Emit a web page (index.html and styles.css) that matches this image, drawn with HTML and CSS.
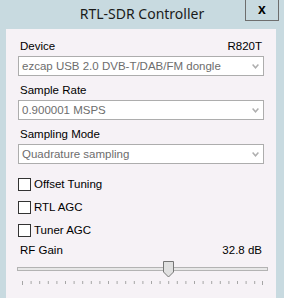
FILE: index.html
```html
<!DOCTYPE html>
<html>
<head>
<meta charset="utf-8">
<link rel="stylesheet" href="styles.css">
</head>
<body>
<div class="window">
  <div class="titlebar">
    <span class="title">RTL-SDR Controller</span>
    <span class="close">x</span>
  </div>
  <div class="panel">
    <div class="field">
      <div class="label-row"><span>Device</span><span>R820T</span></div>
      <div class="combo"><span>ezcap USB 2.0 DVB-T/DAB/FM dongle</span><svg class="chev" width="7" height="5" viewBox="0 0 7 5"><polyline points="0.6,0.6 3.5,3.8 6.4,0.6" fill="none" stroke="#aeaeae" stroke-width="1.5"/></svg></div>
    </div>
    <div class="field">
      <div class="label-row"><span>Sample Rate</span></div>
      <div class="combo"><span>0.900001 MSPS</span><svg class="chev" width="7" height="5" viewBox="0 0 7 5"><polyline points="0.6,0.6 3.5,3.8 6.4,0.6" fill="none" stroke="#aeaeae" stroke-width="1.5"/></svg></div>
    </div>
    <div class="field">
      <div class="label-row"><span>Sampling Mode</span></div>
      <div class="combo"><span>Quadrature sampling</span><svg class="chev" width="7" height="5" viewBox="0 0 7 5"><polyline points="0.6,0.6 3.5,3.8 6.4,0.6" fill="none" stroke="#aeaeae" stroke-width="1.5"/></svg></div>
    </div>
    <div class="checks">
      <label class="check"><span class="box"></span><span>Offset Tuning</span></label>
      <label class="check"><span class="box"></span><span>RTL AGC</span></label>
      <label class="check"><span class="box"></span><span>Tuner AGC</span></label>
    </div>
    <div class="label-row gain-row"><span>RF Gain</span><span>32.8 dB</span></div>
    <svg class="slider" width="251" height="26" viewBox="0 0 251 26">
      <rect x="0.5" y="6.5" width="250" height="3" fill="#e7e7e7" stroke="#b3b3b3"/>
      <g stroke="#a6a6a6" stroke-width="1">
        <line x1="5.5" y1="20" x2="5.5" y2="24"/>
        <line x1="14.1" y1="20" x2="14.1" y2="23"/>
        <line x1="22.7" y1="20" x2="22.7" y2="23"/>
        <line x1="31.3" y1="20" x2="31.3" y2="23"/>
        <line x1="39.9" y1="20" x2="39.9" y2="23"/>
        <line x1="48.5" y1="20" x2="48.5" y2="23"/>
        <line x1="57.1" y1="20" x2="57.1" y2="23"/>
        <line x1="65.7" y1="20" x2="65.7" y2="23"/>
        <line x1="74.3" y1="20" x2="74.3" y2="23"/>
        <line x1="82.9" y1="20" x2="82.9" y2="23"/>
        <line x1="91.5" y1="20" x2="91.5" y2="23"/>
        <line x1="100.1" y1="20" x2="100.1" y2="23"/>
        <line x1="108.7" y1="20" x2="108.7" y2="23"/>
        <line x1="117.3" y1="20" x2="117.3" y2="23"/>
        <line x1="125.9" y1="20" x2="125.9" y2="23"/>
        <line x1="134.5" y1="20" x2="134.5" y2="23"/>
        <line x1="143.1" y1="20" x2="143.1" y2="23"/>
        <line x1="151.7" y1="20" x2="151.7" y2="23"/>
        <line x1="160.3" y1="20" x2="160.3" y2="23"/>
        <line x1="168.9" y1="20" x2="168.9" y2="23"/>
        <line x1="177.5" y1="20" x2="177.5" y2="23"/>
        <line x1="186.1" y1="20" x2="186.1" y2="23"/>
        <line x1="194.7" y1="20" x2="194.7" y2="23"/>
        <line x1="203.3" y1="20" x2="203.3" y2="23"/>
        <line x1="211.9" y1="20" x2="211.9" y2="23"/>
        <line x1="220.5" y1="20" x2="220.5" y2="23"/>
        <line x1="229.1" y1="20" x2="229.1" y2="23"/>
        <line x1="237.7" y1="20" x2="237.7" y2="23"/>
        <line x1="245.5" y1="20" x2="245.5" y2="24"/>
      </g>
      <path d="M146.5 0.5 H156.5 V11 L151.5 16 L146.5 11 Z" fill="#e0e0e0" stroke="#767676"/>
    </svg>
  </div>
</div>
</body>
</html>
```

FILE: styles.css
```css
html, body {
  margin: 0;
  padding: 0;
}

body {
  width: 284px;
  height: 298px;
  overflow: hidden;
  background: #c8dae0;
  font-family: "Liberation Sans", Arial, sans-serif;
  font-size: 11.5px;
  color: #000;
}

.window {
  width: 284px;
  height: 298px;
  display: flex;
  flex-direction: column;
}

.titlebar {
  position: relative;
  height: 29px;
  display: flex;
  justify-content: center;
}

.title {
  font-family: "Noto Sans", sans-serif;
  font-size: 14px;
  line-height: 19px;
  padding-top: 4px;
  color: #1a1a1a;
}

.close {
  position: absolute;
  left: 245px;
  top: -1px;
  width: 34px;
  height: 22px;
  box-sizing: border-box;
  border: 1px solid #6e6e6e;
  font-family: "Liberation Sans", Arial, sans-serif;
  font-weight: bold;
  font-size: 14px;
  line-height: 19px;
  text-align: center;
  color: #000;
}

.panel {
  margin: 0 8px 0 6px;
  flex: 1;
  background: #f6f2f6;
  padding: 11px 12px 0;
  display: flex;
  flex-direction: column;
}

.field {
  display: flex;
  flex-direction: column;
  margin-bottom: 8px;
}

.label-row {
  display: flex;
  justify-content: space-between;
  line-height: 13px;
  height: 13px;
  padding: 0 2px 0 2px;
}

.combo {
  margin-top: 3px;
  height: 20px;
  box-sizing: border-box;
  border: 1px solid #adadad;
  background: #fff;
  display: flex;
  align-items: center;
  justify-content: space-between;
  padding: 1px 4px 0 3px;
  color: #6d6d6d;
  line-height: 17px;
}

.chev {
  display: block;
  margin-top: -1px;
}

.checks {
  margin-top: 6px;
  display: flex;
  flex-direction: column;
  gap: 10px;
}

.check {
  display: flex;
  align-items: center;
  height: 13px;
  line-height: 13px;
}

.box {
  width: 13px;
  height: 13px;
  box-sizing: border-box;
  border: 1px solid #333;
  background: #fff;
  margin-right: 3px;
}

.gain-row {
  margin-top: 7px;
}

.slider {
  display: block;
  margin-top: 4px;
  margin-left: -1px;
}
```
